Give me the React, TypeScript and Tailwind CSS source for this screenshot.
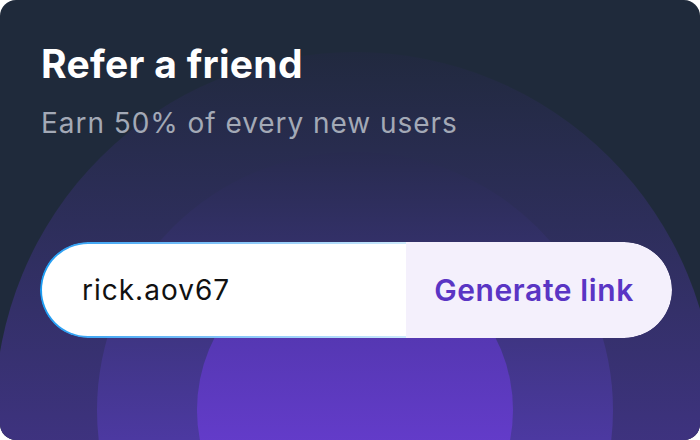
export default function App() {
  return (
    <div className="w-[700px] h-[440px] bg-white" style={{ fontFamily: 'Inter, "Noto Sans", sans-serif' }}>
      <div className="relative w-full h-full overflow-hidden rounded-2xl bg-[#1f2a3b]">
        {/* decorative rings */}
        <div className="absolute left-[-5px] top-[52px] w-[720px] h-[720px] rounded-full bg-linear-to-b from-[#21293f] to-[#5934ba]" />
        <div className="absolute left-[97px] top-[152px] w-[516px] h-[516px] rounded-full bg-linear-to-b from-[#282b4f] to-[#6c3ee8]" />
        <div className="absolute left-[197px] top-[252px] w-[316px] h-[316px] rounded-full bg-linear-to-b from-[#4a34a0] to-[#7440e6]" />

        <div className="relative flex flex-col px-[41px] pt-[38px]">
          <h1 className="text-[39px] leading-[52px] font-bold text-white tracking-[0.3px]">Refer a friend</h1>
          <p className="mt-[14px] text-[28px] leading-[38px] text-[#a3a9b6] tracking-[0.95px]">Earn 50% of every new users</p>

          <div className="mt-[100px] flex h-[96px] w-[632px] -ml-px rounded-full overflow-hidden">
            <div className="flex-1 rounded-l-full bg-linear-to-r from-[#1a9cf2] to-[#cce9fb] py-[2px] pl-[2px]">
              <div className="flex h-full items-center rounded-l-full bg-white pl-[40px]">
                <span className="text-[28px] text-[#111] tracking-[1px]">rick.aov67</span>
              </div>
            </div>
            <button className="w-[266px] h-full rounded-r-full bg-[#f4f0fc] pr-[10px] text-[30px] font-semibold text-[#5a35c4] tracking-[0.6px]">
              Generate link
            </button>
          </div>
        </div>
      </div>
    </div>
  )
}
